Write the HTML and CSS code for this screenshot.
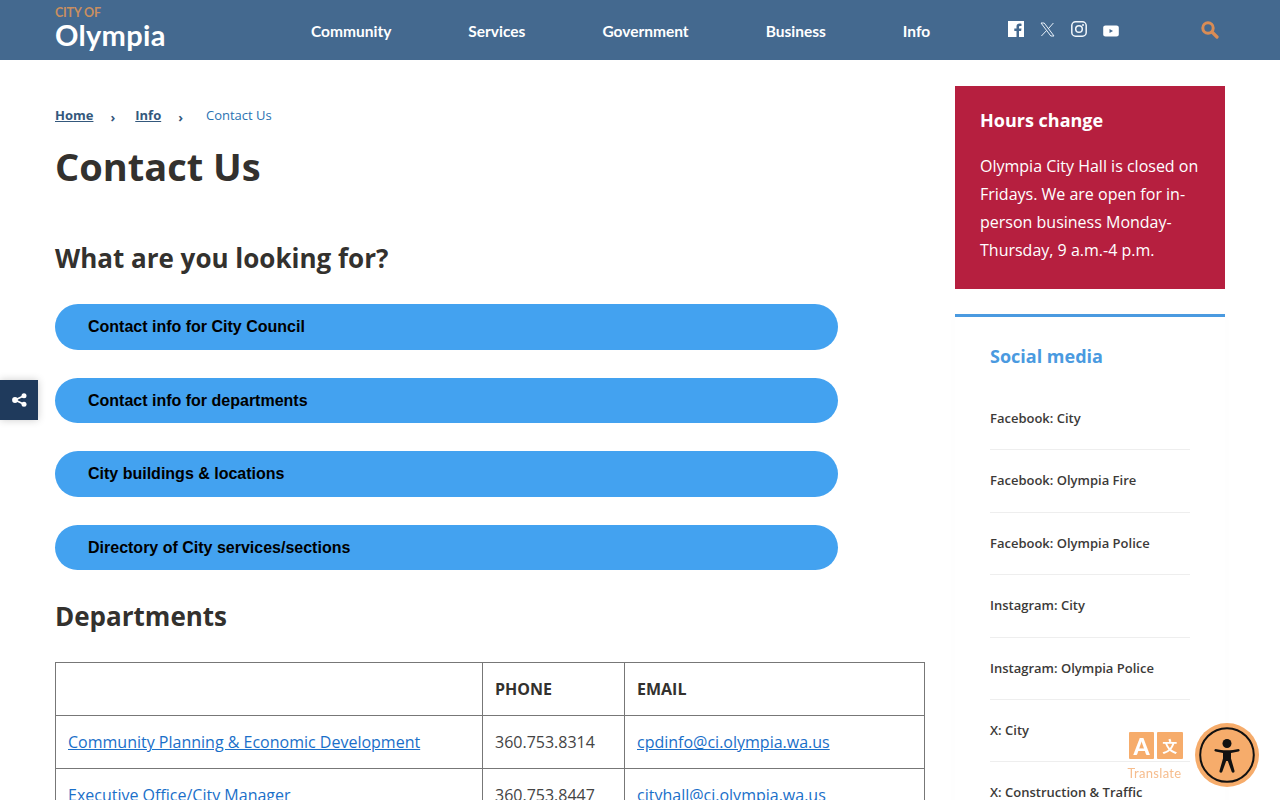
FILE: index.html
```html
<!DOCTYPE html>
<html lang="en">
<head>
<meta charset="utf-8">
<title>Contact Us</title>
<link rel="stylesheet" href="styles.css">
</head>
<body>
<header class="site-header">
  <a class="logo" href="#"><span class="logo-top">CITY OF</span><span class="logo-name">Olympia</span></a>
  <nav class="main-nav">
    <a href="#">Community</a><a href="#">Services</a><a href="#">Government</a><a href="#">Business</a><a href="#">Info</a>
  </nav>
  <div class="socials">
    <svg class="ic-fb" width="16" height="16" viewBox="0 0 16 16"><path fill="#fff" d="M0 0h16v16h-5v-6h2.100l.4-2.500H11V6.100c0-.8.3-1.200 1.200-1.200h1.300V2.700c-.5-.1-1.200-.2-1.900-.2-1.900 0-3.100 1.200-3.100 3.200v1.800H6.300V10h2.200v6H0z"/></svg>
    <svg class="ic-x" width="15" height="15" viewBox="0 0 15 15"><path fill="none" stroke="#e8f1fa" stroke-width="1" d="M1 1h3.200l9.800 13h-3.200zM13.400 1 8.200 6.900M6.600 8.500 1.400 14"/></svg>
    <svg class="ic-ig" width="16" height="16" viewBox="0 0 16 16"><rect x=".8" y=".8" width="14.400" height="14.400" rx="3.800" fill="none" stroke="#f0f6fb" stroke-width="1.500"/><circle cx="8" cy="8" r="3.300" fill="none" stroke="#f0f6fb" stroke-width="1.500"/><circle cx="12" cy="4" r="1" fill="#f0f6fb"/></svg>
    <svg class="ic-yt" width="16" height="12" viewBox="0 0 16 12"><path fill="#fff" fill-rule="evenodd" d="M2.500.5h11A2.300 2.300 0 0 1 15.800 3v6a2.300 2.300 0 0 1-2.300 2.500h-11A2.300 2.300 0 0 1 .2 9V3A2.300 2.300 0 0 1 2.500.5zM6.500 4v4l3.500-2z"/></svg>
  </div>
  <svg class="ic-search" width="18" height="18" viewBox="0 0 18 18"><circle cx="7" cy="7" r="5.200" fill="none" stroke="#d98c55" stroke-width="3"/><path d="M11 11 16 16" stroke="#d98c55" stroke-width="3.200" stroke-linecap="round"/></svg>
</header>

<div class="page">
  <main class="content">
    <ol class="crumbs">
      <li><a href="#">Home</a></li><li class="sep">›</li><li><a href="#">Info</a></li><li class="sep">›</li><li class="current">Contact Us</li>
    </ol>
    <h1>Contact Us</h1>
    <h2 class="looking">What are you looking for?</h2>
    <div class="pills">
      <a class="pill" href="#">Contact info for City Council</a>
      <a class="pill" href="#">Contact info for departments</a>
      <a class="pill" href="#">City buildings &amp; locations</a>
      <a class="pill" href="#">Directory of City services/sections</a>
    </div>
    <h2 class="departments">Departments</h2>
    <table class="dept-table">
      <colgroup><col class="c1"><col class="c2"><col class="c3"></colgroup>
      <tr><th></th><th>PHONE</th><th>EMAIL</th></tr>
      <tr><td><a href="#">Community Planning &amp; Economic Development</a></td><td>360.753.8314</td><td><a href="#">cpdinfo@ci.olympia.wa.us</a></td></tr>
      <tr><td><a href="#">Executive Office/City Manager</a></td><td>360.753.8447</td><td><a href="#">cityhall@ci.olympia.wa.us</a></td></tr>
    </table>
  </main>
  <aside class="side">
    <section class="notice">
      <h3>Hours change</h3>
      <p>Olympia City Hall is closed on Fridays. We are open for in-person business Monday-Thursday, 9 a.m.-4 p.m.</p>
    </section>
    <section class="social-card">
      <h3>Social media</h3>
      <ul>
        <li>Facebook: City</li>
        <li>Facebook: Olympia Fire</li>
        <li>Facebook: Olympia Police</li>
        <li>Instagram: City</li>
        <li>Instagram: Olympia Police</li>
        <li>X: City</li>
        <li>X: Construction &amp; Traffic</li>
      </ul>
    </section>
  </aside>
</div>

<a class="share" href="#" aria-label="Share">
  <svg width="15" height="14" viewBox="0 0 15 14"><path stroke="#fff" stroke-width="1.800" d="M3 7 12 2.800M3 7l9 4.200"/><circle cx="3" cy="7" r="2.900" fill="#fff"/><circle cx="12" cy="2.800" r="2.500" fill="#fff"/><circle cx="12" cy="11.200" r="2.500" fill="#fff"/></svg>
</a>
<a class="translate" href="#">
  <span class="tr-icons">
    <span class="tr-box tr-a">A</span>
    <span class="tr-box"><span class="tr-cjk">文</span></span>
  </span>
  <span class="tr-label">Translate</span>
</a>
<a class="a11y" href="#" aria-label="Accessibility">
  <svg width="64" height="64" viewBox="0 0 64 64"><circle cx="32" cy="32" r="32" fill="#f6ac6b"/><circle cx="32" cy="32" r="26.800" fill="none" stroke="#111" stroke-width="2"/><circle cx="32" cy="20.500" r="4.500" fill="#111"/><path fill="#111" d="M20.500 28.500c-1.500-.4-1.500-2.400 0-2.600 3.500.8 7.500 1.300 11.500 1.300s8-.5 11.500-1.300c1.500.2 1.500 2.200 0 2.600-2.500.7-5 1.100-7.500 1.400v5.600l3.500 12.300c.5 1.800-2 2.700-2.800 1L32.800 38h-1.600l-3.900 10.800c-.8 1.700-3.300.8-2.800-1L28 35.500v-5.600c-2.500-.3-5-.7-7.500-1.400z"/></svg>
</a>
</body>
</html>
```
FILE: styles.css
```css
* { box-sizing: border-box; }
html, body { margin: 0; padding: 0; height: 800px; overflow: hidden; }
body { font-family: "Open Sans", sans-serif; color: #33312e; background: #fff; font-size: 16px; }
a { color: inherit; }

.site-header { height: 60px; background: #44698f; display: flex; align-items: flex-start; padding-left: 55px; position: relative; }
.logo { display: flex; flex-direction: column; width: 110px; text-decoration: none; margin-top: 6px; }
.logo-top { font-family: "Lato", sans-serif; font-weight: 700; font-size: 12.500px; line-height: 14px; color: #c98f60; letter-spacing: -.2px; }
.logo-name { font-family: "Lato", sans-serif; font-weight: 700; font-size: 29px; line-height: 30px; color: #fff; letter-spacing: .3px; }
.main-nav { display: flex; gap: 77px; margin-left: 146px; margin-top: 20px; }
.main-nav a { font-family: "Lato", sans-serif; font-weight: 700; font-size: 15.500px; line-height: 22px; color: #fff; text-decoration: none; }
.socials { display: flex; align-items: center; gap: 16px; margin-left: 77.500px; margin-top: 20px; height: 17px; }
.ic-x { margin-top: 2px; }
.ic-yt { margin-top: 5px; }
.ic-search { margin-left: 82px; margin-top: 21px; }

.page { display: flex; gap: 30px; padding: 26px 55px 0; align-items: flex-start; }
.content { width: 870px; flex: none; }
.side { width: 270px; flex: none; }

.crumbs { list-style: none; margin: 20px 0 0; padding: 0; display: flex; font-size: 13px; line-height: 18px; }
.crumbs a { color: #34587c; font-weight: 700; }
.crumbs .sep { margin: 2px 20px 0 17px; color: #34587c; font-weight: 700; }
.crumbs .current { color: #2a72b2; margin-left: 3px; }
h1 { font-size: 38px; line-height: 50px; font-weight: 700; margin: 15px 0 0; }
h2 { font-size: 26px; line-height: 36px; font-weight: 700; margin: 0; }
.looking { margin-top: 49px; }
.pills { display: flex; flex-direction: column; gap: 28px; margin-top: 28px; }
.pill { display: block; height: 45.600px; border-radius: 23px; background: #43a2f0; color: #000; text-decoration: none; font-family: "Liberation Sans", Arial, sans-serif; font-weight: 700; font-size: 16px; line-height: 45px; padding-left: 33px; width: 783px; }
.departments { margin-top: 28px; }
.dept-table { border-collapse: collapse; width: 869px; margin-top: 28px; table-layout: fixed; color: #444; }
.c1 { width: 427px; } .c2 { width: 142px; } .c3 { width: 300px; }
.dept-table th, .dept-table td { border: 1px solid #777; height: 53px; padding: 0 12px; text-align: left; font-size: 16px; }
.dept-table th { font-weight: 700; color: #33312e; }
.dept-table td a { color: #1a6fc9; }

.notice { background: #b61f3f; color: #fff; padding: 20px 25px 25px; height: 203px; }
.notice h3 { font-size: 18px; line-height: 28px; margin: 0; font-weight: 700; }
.notice p { margin: 18px 0 0; font-size: 16px; line-height: 28px; }
.social-card { margin-top: 25px; border-top: 3px solid #4a9ae0; padding: 24px 35px 0; height: 600px; box-shadow: 0 0 12px rgba(0,0,0,.015); }
.social-card h3 { margin: 0; font-size: 18px; line-height: 30px; font-weight: 700; color: #4a9ae0; }
.social-card ul { list-style: none; margin: 17px 0 0; padding: 0; }
.social-card li { font-size: 13px; font-weight: 600; line-height: 18px; height: 62.400px; padding-top: 21px; border-bottom: 1px solid #eee; color: #3c3a38; }

.share { position: fixed; left: 0; top: 380px; width: 38px; height: 40px; background: #1f3a5c; display: flex; align-items: center; justify-content: center; box-shadow: 0 0 8px rgba(0,0,0,.2); }
.translate { position: fixed; left: 1126.500px; top: 732px; width: 56px; text-decoration: none; display: flex; flex-direction: column; }
.tr-icons { display: flex; gap: 3px; }
.tr-box { width: 25.500px; height: 27px; background: #f6ac6b; color: #fff; display: flex; align-items: center; justify-content: center; font-family: "Lato", sans-serif; font-weight: 900; font-size: 23px; border-radius: 1px; }
.tr-box:first-child { margin-left: 2.500px; }
.tr-cjk { font-family: "Noto Sans CJK SC", sans-serif; font-size: 15px; font-weight: 700; }
.tr-label { font-family: "Lato", sans-serif; color: #f6bd8e; font-size: 13px; line-height: 16px; margin-top: 6px; letter-spacing: .3px; text-align: center; white-space: nowrap; }
.a11y { position: fixed; left: 1195px; top: 723px; width: 64px; height: 64px; display: block; }
.a11y svg { display: block; }
```
